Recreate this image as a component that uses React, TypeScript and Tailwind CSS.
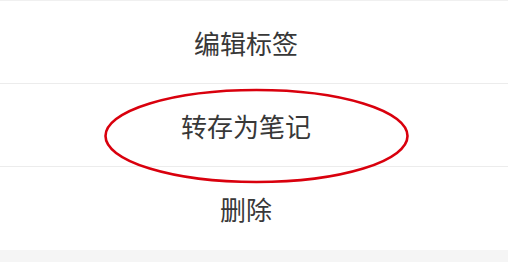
const items = ["编辑标签", "转存为笔记", "删除"];

export default function App() {
  return (
    <div
      className="relative w-[508px] h-[262px] bg-[#f5f5f5] overflow-hidden"
      style={{ fontFamily: '"Noto Sans CJK SC", "Noto Sans", sans-serif' }}
    >
      <div className="bg-white border-t border-[#f0f0f0]">
        {items.map((label, i) => (
          <div
            key={label}
            className={`h-[83px] flex items-center justify-center pr-[16px] text-[26px] text-[#383838] ${
              i < items.length - 1 ? "border-b border-[#ececec]" : ""
            }`}
          >
            {label}
          </div>
        ))}
      </div>

      {/* red annotation ellipse */}
      <svg
        className="absolute left-0 top-0 pointer-events-none"
        width="508"
        height="262"
        viewBox="0 0 508 262"
      >
        <ellipse
          cx="256.5"
          cy="136"
          rx="151"
          ry="46"
          fill="none"
          stroke="#d9000d"
          strokeWidth="2.6"
        />
      </svg>
    </div>
  );
}
